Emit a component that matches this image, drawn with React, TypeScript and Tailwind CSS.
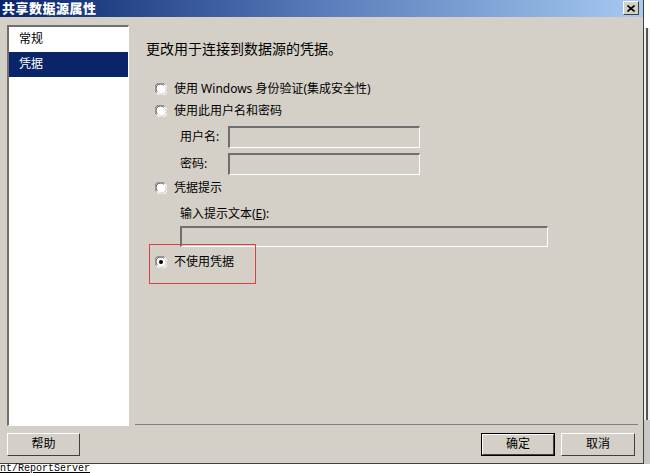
import React from 'react';

const font = { fontFamily: '"Noto Sans", "Noto Sans CJK SC", sans-serif' };

function Radio({ checked = false }: { checked?: boolean }) {
  return (
    <svg width="12" height="12" viewBox="0 0 12 12" className="shrink-0">
      <circle cx="6" cy="6" r="5.5" fill="#ffffff" />
      <path d="M1.3 9.5 A5.5 5.5 0 0 1 9.5 1.3" fill="none" stroke="#808080" strokeWidth="1" />
      <path d="M2.3 8.8 A4.5 4.5 0 0 1 8.8 2.3" fill="none" stroke="#404040" strokeWidth="1" />
      <path d="M10.7 2.5 A5.5 5.5 0 0 1 2.5 10.7" fill="none" stroke="#ffffff" strokeWidth="1" />
      <path d="M9.7 3.2 A4.5 4.5 0 0 1 3.2 9.7" fill="none" stroke="#d4d0c8" strokeWidth="1" />
      {checked && <circle cx="6" cy="6" r="2" fill="#000000" />}
    </svg>
  );
}

function Field({ className }: { className: string }) {
  return (
    <div
      className={`bg-[#d4d0c8] border-t-2 border-l-2 border-b border-r border-t-[#6f6f6f] border-l-[#6f6f6f] border-b-white border-r-white ${className}`}
    />
  );
}

function Button({ label, isDefault = false, className = '' }: { label: string; isDefault?: boolean; className?: string }) {
  return (
    <div className={`${isDefault ? 'border border-black' : ''} ${className}`}>
      <div className="h-full flex items-center justify-center bg-[#d4d0c8] border border-t-white border-l-white border-b-[#404040] border-r-[#404040] text-[12px] leading-none text-black">
        {label}
      </div>
    </div>
  );
}

export default function App() {
  return (
    <div className="w-[650px] h-[473px] bg-white overflow-hidden flex flex-col text-black" style={font}>
      <div className="flex h-[464px]">
        <div className="w-[644px] h-full flex flex-col bg-[#d4d0c8] border-r border-b border-r-[#404040] border-b-[#404040]">
          <div className="h-[17px] flex items-center justify-between pl-[2px] pr-[4px] bg-gradient-to-r from-[#0a246a] via-[#5a7cba] to-[#a6caf0]">
            <span className="text-white text-[13px] font-black leading-none tracking-[0.5px]">共享数据源属性</span>
            <div className="w-[16px] h-[14px] flex items-center justify-center bg-[#d4d0c8] border border-t-white border-l-white border-b-[#404040] border-r-[#404040]">
              <svg width="8" height="7" viewBox="0 0 8 7">
                <path d="M0.5 0.5 L7.5 6.5 M7.5 0.5 L0.5 6.5" stroke="#000" strokeWidth="1.6" />
              </svg>
            </div>
          </div>

          <div className="flex flex-1 pt-[8px] pl-[7px]">
            <div className="w-[122px] h-[401px] bg-white border-t-2 border-l-2 border-b border-r border-t-[#6f6f6f] border-l-[#6f6f6f] border-b-white border-r-white flex flex-col">
              <div className="h-[25px] flex items-center pl-[10px] text-[12px] leading-none">常规</div>
              <div className="h-[25px] flex items-center pl-[10px] text-[12px] leading-none bg-[#0a246a] text-white">凭据</div>
            </div>

            <div className="w-[503px] ml-[6px] h-[400px] border-b border-b-[#808080] flex flex-col relative">
              <div className="mt-[14px] h-[20px] pl-[11px] flex items-center text-[14px] leading-none">
                更改用于连接到数据源的凭据。
              </div>

              <div className="mt-[19px] h-[22px] pl-[20px] flex items-center gap-[7px] text-[12px] leading-none">
                <Radio />
                <span>使用 Windows 身份验证(集成安全性)</span>
              </div>
              <div className="h-[22px] pl-[20px] flex items-center gap-[7px] text-[12px] leading-none">
                <Radio />
                <span>使用此用户名和密码</span>
              </div>

              <div className="mt-[4px] h-[22px] pl-[45px] flex items-center text-[12px] leading-none">
                <span className="w-[48px]">用户名:</span>
                <Field className="w-[192px] h-[22px]" />
              </div>
              <div className="mt-[5px] h-[22px] pl-[45px] flex items-center text-[12px] leading-none">
                <span className="w-[48px]">密码:</span>
                <Field className="w-[192px] h-[22px]" />
              </div>

              <div className="mt-[2px] h-[22px] pl-[20px] flex items-center gap-[7px] text-[12px] leading-none">
                <Radio />
                <span>凭据提示</span>
              </div>
              <div className="mt-[4px] h-[22px] pl-[45px] flex items-center text-[12px] leading-none">
                <span>
                  输入提示文本(<span className="underline">E</span>):
                </span>
              </div>
              <div className="mt-[1px] pl-[45px]">
                <Field className="w-[368px] h-[21px]" />
              </div>

              <div className="mt-[4px] h-[22px] pl-[20px] flex items-center gap-[7px] text-[12px] leading-none">
                <Radio checked />
                <span>不使用凭据</span>
              </div>

              <div className="absolute left-[14px] top-[219px] w-[107px] h-[40px] border border-[#d9403f]" />
            </div>
          </div>

          <div className="h-[38px] flex items-start pt-[7px] pl-[7px] pr-[8px]">
            <Button label="帮助" className="w-[73px] h-[23px]" />
            <div className="flex-1" />
            <Button label="确定" isDefault className="w-[74px] h-[23px]" />
            <Button label="取消" className="w-[74px] h-[23px] ml-[6px]" />
          </div>
        </div>

        <div className="flex-1 bg-[#f0f0f0] flex flex-col">
          <div className="h-[28px] bg-white" />
          <div className="h-[392px] ml-[2px] border-l-2 border-[#555]" />
          <div className="flex-1 bg-[#c8c8c8]" />
        </div>
      </div>

      <div className="h-[9px] leading-[10px] text-[10px] underline" style={{ fontFamily: '"Liberation Mono", monospace' }}>
        nt/ReportServer
      </div>
    </div>
  );
}
